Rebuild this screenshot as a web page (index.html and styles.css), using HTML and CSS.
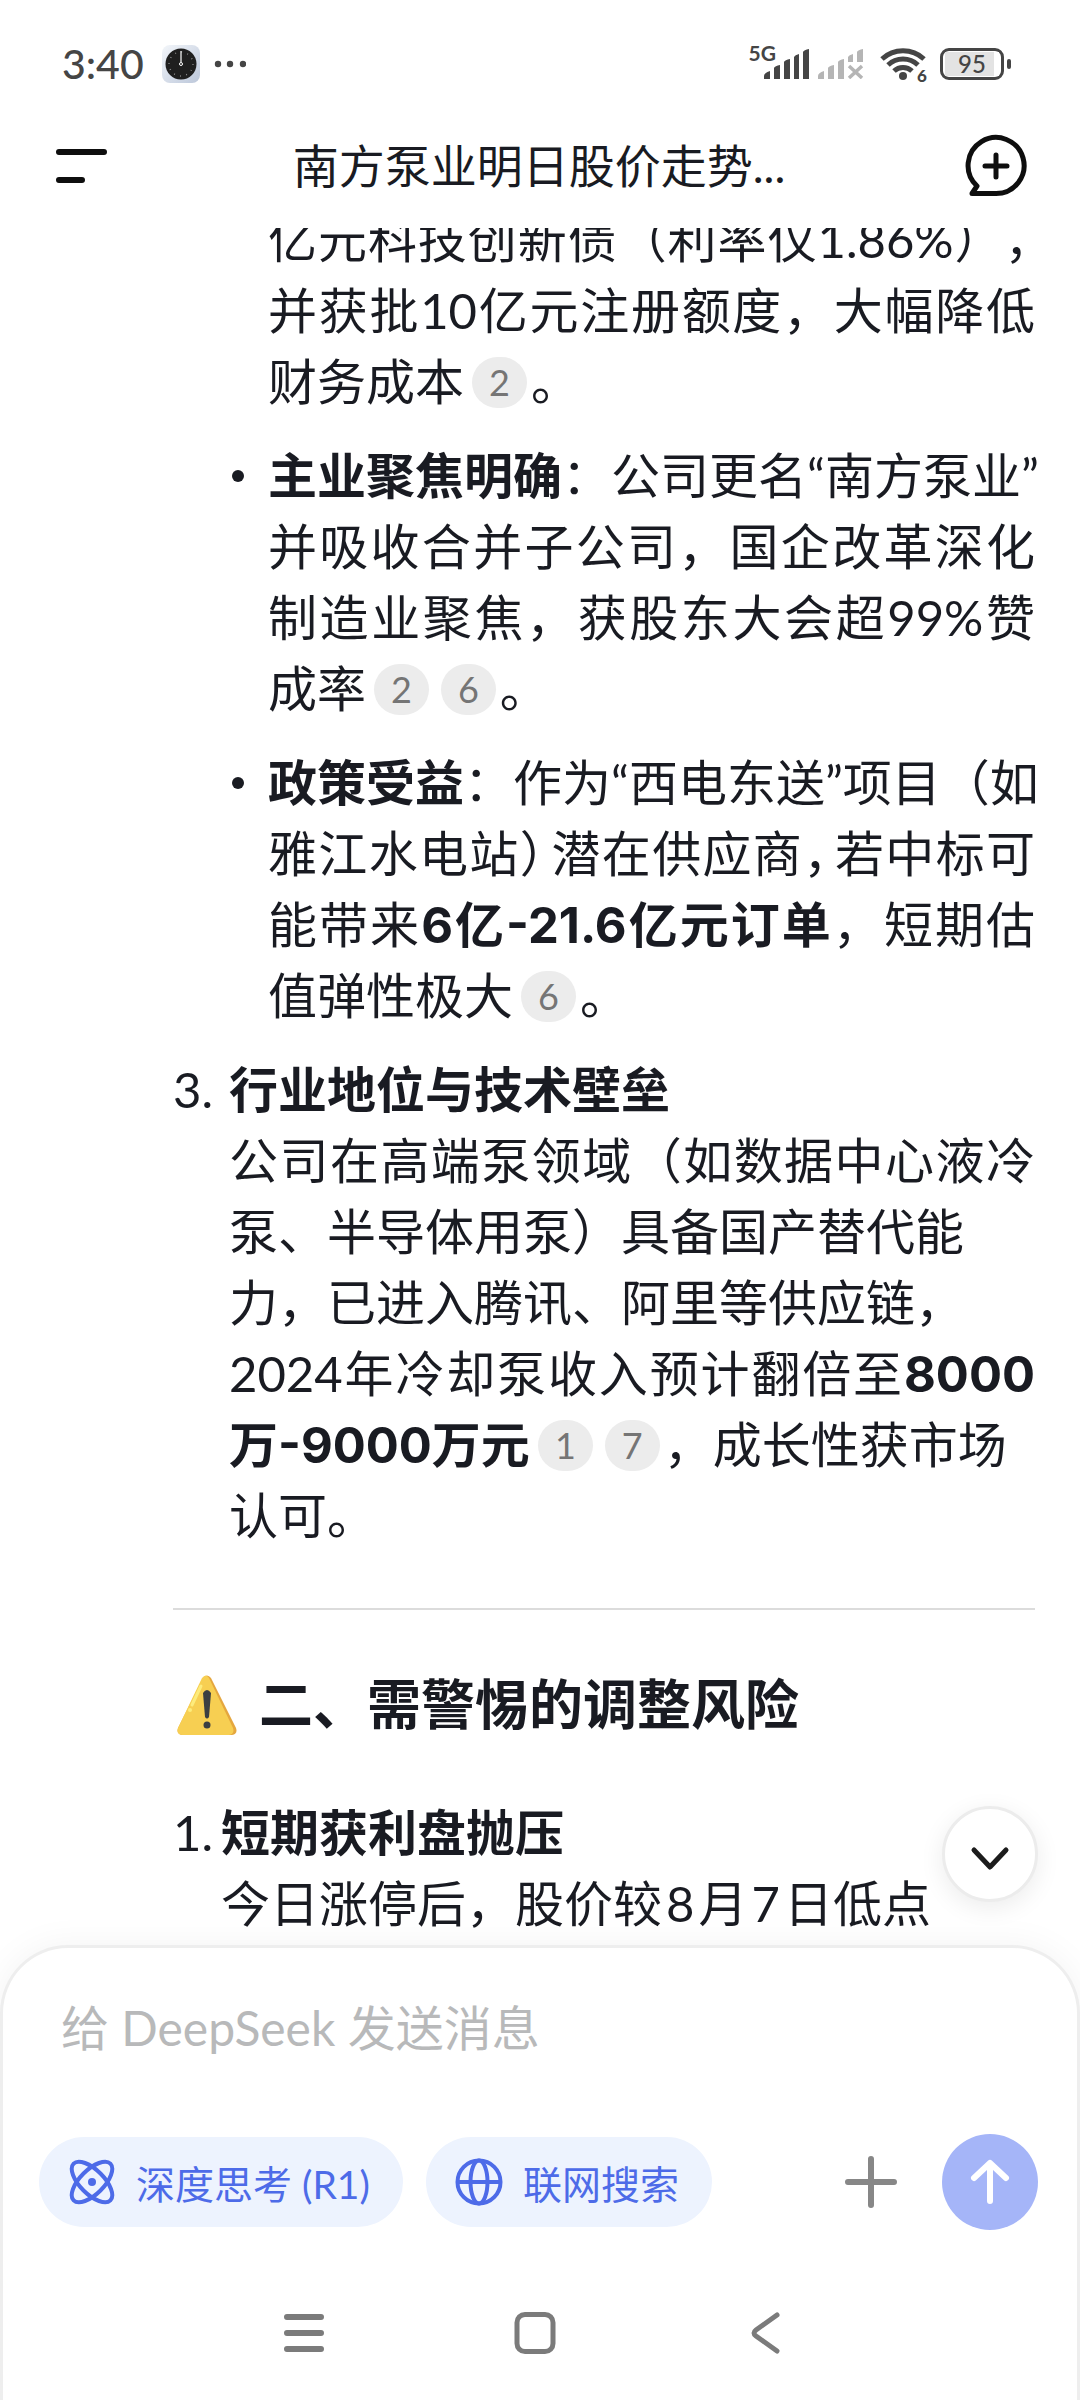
FILE: index.html
```html
<!DOCTYPE html>
<html lang="zh-CN">
<head>
<meta charset="utf-8">
<meta name="viewport" content="width=device-width, initial-scale=1">
<title>南方泵业明日股价走势</title>
<link rel="stylesheet" href="styles.css">
</head>
<body>
<div class="screen">

	<div class="status">
		<span class="time">3:40</span>
		<svg class="clock" width="38" height="38" viewBox="0 0 38 38">
			<defs>
				<linearGradient id="tile" x1="0" y1="0" x2="1" y2="1">
					<stop offset="0" stop-color="#f3f6fa"/>
					<stop offset="1" stop-color="#bcc7da"/>
				</linearGradient>
			</defs>
			<rect width="38" height="38" rx="8" fill="url(#tile)"/>
			<circle cx="19" cy="19" r="15.5" fill="#1f1f1f"/>
			<circle cx="19" cy="19" r="12" fill="none" stroke="#999" stroke-width="1.5" stroke-dasharray="0.8 5.48"/>
			<path d="M19 6v11" stroke="#fff" stroke-width="1.2"/>
			<circle cx="19" cy="19" r="1.5" fill="none" stroke="#fff"/>
		</svg>
		<svg width="32" height="8" viewBox="0 0 32 8" fill="#454545">
			<circle cx="4" cy="4" r="3.2"/><circle cx="16" cy="4" r="3.2"/><circle cx="29" cy="4" r="3.2"/>
		</svg>
		<div class="radios">
			<span class="net">5G</span>
			<svg width="46" height="30" viewBox="0 0 46 30" fill="#454545">
				<path d="M0 30v-3q0-3 6-5v8zM10 30V19q1-2 6-3v14zM20 30V13q1-2 6-3v20zM30 30V8q1-2 5-3v25zM39 30V3q1-2 6-3v30z"/>
			</svg>
			<svg width="46" height="30" viewBox="0 0 46 30" fill="#b5b5b5">
				<path d="M0 30v-3q0-3 6-5v8zM10 30V19q1-2 6-3v14zM20 30V13q1-2 6-3v20zM30 13V8q1-2 5-3v8zM39 13V3q1-2 6-3v13z"/>
				<path d="M31 17l13 12M44 17L31 29" stroke="#b5b5b5" stroke-width="3.5"/>
			</svg>
			<svg class="wifi" width="48" height="38" viewBox="0 0 48 38" fill="none" stroke="#454545" stroke-width="5">
				<path d="M2 14a31 31 0 0 1 42 0M8 20a22 22 0 0 1 30 0M14 26a13 13 0 0 1 18 0"/>
				<circle cx="23" cy="31" r="4" fill="#454545" stroke="none"/>
				<text x="37" y="37" font-size="17">6</text>
			</svg>
			<span class="battery"><span>95</span></span>
		</div>
	</div>

	<header class="topbar">
		<button class="icon-btn" aria-label="菜单">
			<svg width="64" height="64" viewBox="0 0 64 64" stroke="#0e0e0e" stroke-width="6" stroke-linecap="round">
				<path d="M9 18h45M9 46h23"/>
			</svg>
		</button>
		<h1>南方泵业明日股价走势...</h1>
		<button class="icon-btn" aria-label="新对话">
			<svg width="64" height="64" viewBox="0 0 64 64" fill="none" stroke="#0e0e0e" stroke-width="5" stroke-linecap="round" stroke-linejoin="round">
				<path d="M8 59.500l5-7.500A28 28 0 1 1 32 59.500z"/>
				<path d="M32 21v22M21 32h22"/>
			</svg>
		</button>
	</header>

	<main class="chat">
		<article class="answer">
			<ul class="points">
				<li>
					<span class="line">亿元科技创新债（利率仅1.86%）<i>，</i></span>
					<span class="line">并获批10亿元注册额度，大幅降低</span>
					<span class="line end">财务成本<a class="cite" href="#ref2">2</a>。</span>
				</li>
				<li class="dot">
					<span class="line"><b>主业聚焦明确</b>：公司更名“南方泵业”</span>
					<span class="line">并吸收合并子公司，国企改革深化</span>
					<span class="line">制造业聚焦，获股东大会超99%赞</span>
					<span class="line end">成率<a class="cite" href="#ref2">2</a><a class="cite" href="#ref6">6</a>。</span>
				</li>
				<li class="dot">
					<span class="line"><b>政策受益</b>：作为“西电东送”项目（如</span>
					<span class="line">雅江水电站<i>）</i>潜在供应商<i>，</i>若中标可</span>
					<span class="line">能带来<b>6亿-21.6亿元订单</b>，短期估</span>
					<span class="line end">值弹性极大<a class="cite" href="#ref6">6</a>。</span>
				</li>
			</ul>
			<div class="item">
				<span class="num">3.</span>
				<div class="item-text">
					<span class="line end"><b>行业地位与技术壁垒</b></span>
					<span class="line">公司在高端泵领域（如数据中心液冷</span>
					<span class="line end">泵、半导体用泵）具备国产替代能</span>
					<span class="line end">力，已进入腾讯、阿里等供应链，</span>
					<span class="line">2024年冷却泵收入预计翻倍至<b>8000</b></span>
					<span class="line end"><b>万-9000万元</b><a class="cite" href="#ref1">1</a><a class="cite" href="#ref7">7</a>，成长性获市场</span>
					<span class="line end">认可。</span>
				</div>
			</div>
			<hr>
			<h2>
				<svg width="60" height="60" viewBox="0 0 60 60">
					<path d="M26 3q4-5 8 0l25 50q2 6-4 7H5q-6-1-4-7z" fill="#e5a73e"/>
					<path d="M25 3q4-5 7 0l24 50q2 6-4 7H5q-6-1-4-7z" fill="#f7cf52"/>
					<path d="M24 11L15 30" stroke="#fdec7c" stroke-width="3" stroke-linecap="round"/>
					<circle cx="13" cy="35" r="2" fill="#fdec7c"/>
					<path d="M26 18q4-6 8 0l-2 24q-2 3-4 0z" fill="#3b3f42"/>
					<circle cx="30" cy="50" r="3.500" fill="#3b3f42"/>
				</svg>
				二、需警惕的调整风险
			</h2>
			<div class="item first">
				<span class="num">1.</span>
				<div class="item-text">
					<span class="line end"><b>短期获利盘抛压</b></span>
					<span class="line end">今日涨停后，股价较<em>8</em>月<em>7</em>日低点</span>
				</div>
			</div>
		</article>
		<button class="to-bottom" aria-label="滚动到底部">
			<svg width="48" height="48" viewBox="0 0 48 48" fill="none" stroke="#1c1c1c" stroke-width="5" stroke-linecap="round" stroke-linejoin="round">
				<path d="M8 20l16 17 16-17"/>
			</svg>
		</button>
	</main>

	<footer class="composer">
		<input class="message" type="text" placeholder="给 DeepSeek 发送消息" aria-label="给 DeepSeek 发送消息">
		<div class="tools">
			<button class="chip">
				<svg width="48" height="48" viewBox="0 0 48 48" fill="none" stroke="#4d6be8" stroke-width="4">
					<ellipse cx="24" cy="24" rx="26" ry="12" transform="rotate(45 24 24)"/>
					<ellipse cx="24" cy="24" rx="26" ry="12" transform="rotate(-45 24 24)"/>
					<circle cx="24" cy="24" r="4" fill="#4d6be8" stroke="none"/>
				</svg>
				深度思考 (R1)
			</button>
			<button class="chip">
				<svg width="48" height="48" viewBox="0 0 48 48" fill="none" stroke="#4d6be8" stroke-width="4">
					<circle cx="24" cy="24" r="21.500"/>
					<ellipse cx="24" cy="24" rx="8.500" ry="21.500"/>
					<path d="M2 24h44"/>
				</svg>
				联网搜索
			</button>
			<button class="icon-btn plus" aria-label="添加">
				<svg width="64" height="64" viewBox="0 0 64 64" stroke="#878787" stroke-width="6" stroke-linecap="round">
					<path d="M32 9v46M9 32h46"/>
				</svg>
			</button>
			<button class="send" aria-label="发送">
				<svg width="48" height="48" viewBox="0 0 48 48" fill="none" stroke="#fff" stroke-width="6" stroke-linecap="round" stroke-linejoin="round">
					<path d="M24 43V6M8 20L24 5l16 15"/>
				</svg>
			</button>
		</div>
		<nav class="sysnav">
			<button aria-label="最近任务">
				<svg width="48" height="48" viewBox="0 0 48 48" stroke="#7b7b7b" stroke-width="6" stroke-linecap="round">
					<path d="M7 8h34M7 24h34M7 40h34"/>
				</svg>
			</button>
			<button aria-label="主屏幕">
				<svg width="48" height="48" viewBox="0 0 48 48" fill="none" stroke="#7b7b7b" stroke-width="5">
					<rect x="6" y="5.500" width="36" height="37" rx="8"/>
				</svg>
			</button>
			<button aria-label="返回">
				<svg width="48" height="48" viewBox="0 0 48 48" fill="none" stroke="#7b7b7b" stroke-width="5" stroke-linecap="round">
					<path d="M35 6L14 21q-4 3 0 6l21 15"/>
				</svg>
			</button>
		</nav>
	</footer>

</div>
</body>
</html>
```

FILE: styles.css
```css
*{box-sizing:border-box;}
body{margin:0;background:#fff;color:#191b22;font-family:Lato,"Noto Sans CJK SC",sans-serif;}
button{margin:0;padding:0;border:0;background:none;font-family:inherit;color:inherit;}
svg{display:block;flex:none;}
.screen{display:flex;flex-direction:column;height:100vh;overflow:hidden;}

/* status bar */
.status{display:flex;align-items:center;height:128px;padding:0 76px 0 62px;color:#454545;}
.time{font-size:41px;line-height:48px;font-weight:500;}
.clock{margin:0 14px 0 18px;}
.radios{display:flex;align-items:center;gap:8px;margin-left:auto;}
.net{align-self:flex-start;margin:-5px -20px 0 0;font-size:21px;line-height:26px;font-weight:700;}
.wifi{margin-left:8px;overflow:visible;}
.wifi text{fill:#454545;stroke:none;font-weight:900;}
.battery{position:relative;width:64px;height:32px;margin-left:4px;padding:1px 2px;border:3px solid #454545;border-radius:9px;}
.battery span{display:block;background:linear-gradient(90deg,#e3e3e3 90%,#fff 90%);font-size:24px;line-height:24px;text-align:center;font-weight:500;}
.battery:after{content:"";position:absolute;right:-10px;top:8px;width:4px;height:10px;border-radius:2px;background:#454545;}

/* title bar */
.topbar{display:flex;align-items:center;justify-content:space-between;height:100px;padding:0 52px 24px 50px;}
.topbar h1{margin:0;font-size:46px;line-height:60px;font-weight:400;}
.icon-btn{width:64px;height:64px;}

/* conversation */
.chat{position:relative;flex:1;min-height:0;}
.answer{height:100%;overflow:hidden;padding:0 45px 0 173px;font-size:49px;line-height:71px;}
.points{list-style:none;margin:-24px 0 23px;padding:0 0 0 95px;}
.points li{position:relative;margin-bottom:23px;}
.dot:before{content:"";position:absolute;left:-36px;top:30px;width:12px;height:12px;border-radius:50%;background:#191b22;}
.line{display:block;white-space:nowrap;text-align:justify;text-align-last:justify;text-spacing-trim:space-all;}
.line.end{text-align-last:left;}
.line b{font-family:Inter,"Noto Sans CJK SC",sans-serif;line-height:1;}
.line i{margin-right:6px;font-style:normal;font-feature-settings:"halt";}
.line em{margin:0 4px;font-style:normal;}
.cite{display:inline-block;margin:0 4px 0 8px;padding:0 17px;border-radius:26px;background:#ececec;color:#757575;font-size:36px;line-height:51px;text-decoration:none;vertical-align:4px;}
.item{display:flex;}
.num{width:56px;}
.first .num{width:48px;}
.item-text{flex:1;min-width:0;}
hr{margin:57px 0 58px;border:0;border-top:2px solid #dcdcdc;}
h2{display:flex;align-items:center;gap:22px;margin:0 0 55px;padding-left:4px;font-size:54px;line-height:74px;font-weight:700;}
.to-bottom{position:absolute;right:42px;bottom:43px;display:flex;align-items:center;justify-content:center;width:96px;height:96px;border:3px solid #ececec;border-radius:50%;background:#fff;box-shadow:0 6px 24px rgba(0,0,0,.08);}

/* message box */
.composer{position:relative;padding:43px 39px 43px 36px;border:3px solid #eee;border-bottom:0;border-radius:68px 68px 0 0;background:#fff;box-shadow:0 0 36px rgba(0,0,0,.05);}
.message{display:block;width:100%;height:72px;padding:0 22px;border:0;outline:0;background:none;font-family:inherit;font-size:48px;color:#191b22;}
.message::placeholder{color:#b8b9ba;opacity:1;}
.tools{display:flex;align-items:center;margin-top:71px;}
.chip{display:flex;align-items:center;gap:20px;height:90px;margin-right:23px;padding:0 33px 0 29px;border-radius:45px;background:#edf3fe;color:#4d6be8;font-size:39px;white-space:nowrap;}
.plus{margin:0 39px 0 auto;}
.send{display:flex;align-items:center;justify-content:center;width:96px;height:96px;border-radius:50%;background:#a5b5f8;}
.sysnav{display:flex;justify-content:center;gap:183px;padding:79px 8px 0 0;}
```
